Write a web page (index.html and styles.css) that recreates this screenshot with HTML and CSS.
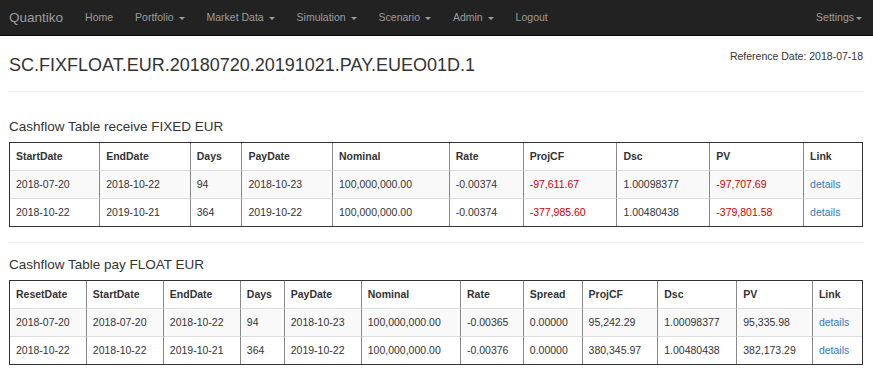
FILE: index.html
```html
<!DOCTYPE html>
<html lang="en">
<head>
    <meta charset="UTF-8">
    <meta name="viewport" content="width=device-width, initial-scale=1.0">
    <title>Quantiko - Swap</title>
    <link rel="stylesheet" href="styles.css">
</head>
<body>
    <nav class="navbar">
        <a class="brand" href="#">Quantiko</a>
        <ul class="nav">
            <li><a href="#">Home</a></li>
            <li><a href="#">Portfolio <span class="caret"></span></a></li>
            <li><a href="#">Market Data <span class="caret"></span></a></li>
            <li><a href="#">Simulation <span class="caret"></span></a></li>
            <li><a href="#">Scenario <span class="caret"></span></a></li>
            <li><a href="#">Admin <span class="caret"></span></a></li>
            <li><a href="#">Logout</a></li>
        </ul>
        <ul class="nav nav-right">
            <li><a href="#">Settings<span class="caret"></span></a></li>
        </ul>
    </nav>

    <div class="container">
        <div class="title-row">
            <h3>SC.FIXFLOAT.EUR.20180720.20191021.PAY.EUEO01D.1</h3>
            <div class="ref-date">Reference Date: 2018-07-18</div>
        </div>
        <hr>

        <h4 class="first">Cashflow Table receive FIXED EUR</h4>
        <table class="cf-table">
            <thead>
                <tr>
                    <th>StartDate</th>
                    <th>EndDate</th>
                    <th>Days</th>
                    <th>PayDate</th>
                    <th>Nominal</th>
                    <th>Rate</th>
                    <th>ProjCF</th>
                    <th>Dsc</th>
                    <th>PV</th>
                    <th>Link</th>
                </tr>
            </thead>
            <tbody>
                <tr>
                    <td>2018-07-20</td>
                    <td>2018-10-22</td>
                    <td>94</td>
                    <td>2018-10-23</td>
                    <td>100,000,000.00</td>
                    <td>-0.00374</td>
                    <td class="neg">-97,611.67</td>
                    <td>1.00098377</td>
                    <td class="neg">-97,707.69</td>
                    <td><a href="#">details</a></td>
                </tr>
                <tr>
                    <td>2018-10-22</td>
                    <td>2019-10-21</td>
                    <td>364</td>
                    <td>2019-10-22</td>
                    <td>100,000,000.00</td>
                    <td>-0.00374</td>
                    <td class="neg">-377,985.60</td>
                    <td>1.00480438</td>
                    <td class="neg">-379,801.58</td>
                    <td><a href="#">details</a></td>
                </tr>
            </tbody>
        </table>
        <hr>

        <h4>Cashflow Table pay FLOAT EUR</h4>
        <table class="cf-table">
            <thead>
                <tr>
                    <th>ResetDate</th>
                    <th>StartDate</th>
                    <th>EndDate</th>
                    <th>Days</th>
                    <th>PayDate</th>
                    <th>Nominal</th>
                    <th>Rate</th>
                    <th>Spread</th>
                    <th>ProjCF</th>
                    <th>Dsc</th>
                    <th>PV</th>
                    <th>Link</th>
                </tr>
            </thead>
            <tbody>
                <tr>
                    <td>2018-07-20</td>
                    <td>2018-07-20</td>
                    <td>2018-10-22</td>
                    <td>94</td>
                    <td>2018-10-23</td>
                    <td>100,000,000.00</td>
                    <td>-0.00365</td>
                    <td>0.00000</td>
                    <td>95,242.29</td>
                    <td>1.00098377</td>
                    <td>95,335.98</td>
                    <td><a href="#">details</a></td>
                </tr>
                <tr>
                    <td>2018-10-22</td>
                    <td>2018-10-22</td>
                    <td>2019-10-21</td>
                    <td>364</td>
                    <td>2019-10-22</td>
                    <td>100,000,000.00</td>
                    <td>-0.00376</td>
                    <td>0.00000</td>
                    <td>380,345.97</td>
                    <td>1.00480438</td>
                    <td>382,173.29</td>
                    <td><a href="#">details</a></td>
                </tr>
            </tbody>
        </table>
    </div>
</body>
</html>
```

FILE: styles.css
```css
body {
    font-family: "Liberation Sans", Arial, sans-serif;
    font-size: 10.5px;
    line-height: 15px;
    color: #333;
    background-color: #fff;
    margin: 0;
    padding: 0;
}
a {
    color: #337ab7;
    text-decoration: none;
}

/* navbar */
.navbar {
    display: flex;
    align-items: center;
    height: 35px;
    background-color: #222;
    border-bottom: 1px solid #080808;
}
.brand {
    color: #9d9d9d;
    font-size: 13.5px;
    padding: 0 11px 0 9px;
}
.nav {
    display: flex;
    list-style: none;
    margin: 0;
    padding: 0;
}
.nav a {
    display: block;
    color: #9d9d9d;
    padding: 0 11px;
}
.nav-right {
    margin-left: auto;
}
.caret {
    display: inline-block;
    width: 0;
    height: 0;
    margin-left: 2px;
    vertical-align: middle;
    border-top: 3px solid;
    border-left: 3px solid transparent;
    border-right: 3px solid transparent;
}

/* content */
.container {
    padding: 0 10px 0 9px;
}
.title-row {
    display: flex;
    justify-content: space-between;
    align-items: flex-start;
}
h3 {
    font-size: 18px;
    font-weight: normal;
    line-height: 20px;
    margin: 19px 0 0;
}
.ref-date {
    margin-top: 13px;
}
hr {
    border: 0;
    border-top: 1px solid #eee;
    height: 0;
    margin: 15px 0 0;
}
.title-row + hr {
    margin-top: 16px;
}
h4 {
    font-size: 13.5px;
    font-weight: normal;
    line-height: 15px;
    margin: 14px 0 8px;
}
h4.first {
    margin-top: 27px;
}

/* tables */
.cf-table {
    width: 100%;
    border-collapse: separate;
    border-spacing: 0;
    border: 1px solid #333;
}
.cf-table th,
.cf-table td {
    text-align: left;
    padding: 6px;
    border-left: 1px solid #888;
    border-top: 1px solid #ddd;
    white-space: nowrap;
}
.cf-table th {
    font-weight: bold;
    border-top: 0;
}
.cf-table th:first-child,
.cf-table td:first-child {
    border-left: 0;
}
.cf-table tbody tr:nth-child(odd) {
    background-color: #f9f9f9;
}
.neg {
    color: #c00;
}
```
